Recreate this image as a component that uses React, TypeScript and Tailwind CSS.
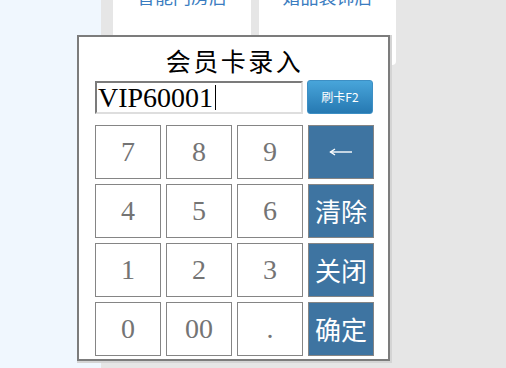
import React from "react";

const cjk = { fontFamily: '"Noto Sans CJK SC", sans-serif' };
const serif = { fontFamily: '"Liberation Serif", "Noto Sans CJK SC", serif' };

function NumKey({ label }: { label: string }) {
  return (
    <div
      className="flex h-[54px] w-[66px] items-center justify-center border border-[#858585] bg-white text-[28px] leading-none text-[#747474]"
      style={serif}
    >
      {label}
    </div>
  );
}

function BlueKey({ children }: { children: React.ReactNode }) {
  return (
    <div
      className="flex h-[54px] w-[66px] items-center justify-center border border-[#858585] bg-[#3e74a1] text-[26px] leading-none text-white"
      style={cjk}
    >
      {children}
    </div>
  );
}

export default function App() {
  return (
    <div className="relative h-[368px] w-[506px] overflow-hidden">
      <div className="flex h-full w-full">
        <div className="h-full w-[101px] bg-[#f0f7fe]" />
        <div className="flex h-full flex-1 gap-[8px] bg-[#e6e6e6] pl-[12px]">
          <div className="flex h-[65px] w-[138px] justify-center overflow-hidden rounded-b-[4px] bg-white">
            <div className="mt-[-13px] text-[18px] leading-[18px] text-[#3a7cc0]" style={cjk}>
              智能门房店
            </div>
          </div>
          <div className="flex h-[65px] w-[137px] justify-center overflow-hidden rounded-b-[4px] bg-white">
            <div className="mt-[-13px] text-[18px] leading-[18px] text-[#3a7cc0]" style={cjk}>
              婚品装饰店
            </div>
          </div>
        </div>
      </div>

      <div className="absolute left-[77px] top-[35px] flex h-[326px] w-[313px] flex-col border-2 border-[#7c7c7c] bg-white shadow-[1px_1px_0_1px_#d4d4d4]">
        <div className="flex h-[43px] items-center justify-center pl-[2px] pt-[3px]">
          <div className="text-[25px] leading-none tracking-[2.5px] text-black" style={cjk}>
            会员卡录入
          </div>
        </div>
        <div className="flex h-[34px] items-start gap-[4px] pl-[16px]">
          <div className="mt-[1px] flex h-[33px] w-[208px] items-center border-2 border-t-[#7b7b7b] border-l-[#7b7b7b] border-r-[#dedede] border-b-[#dedede] bg-white pl-[1px]">
            <span className="text-[28px] leading-none text-black" style={serif}>
              VIP60001
            </span>
            <span className="ml-[2px] h-[25px] w-px bg-black" />
          </div>
          <div
            className="flex h-[34px] w-[66px] items-center justify-center rounded-[3px] border border-[#3d8fc4] bg-gradient-to-b from-[#48a5da] to-[#2679b2] text-[12px] leading-none text-white"
            style={cjk}
          >
            刷卡F2
          </div>
        </div>
        <div className="mt-[11px] grid grid-cols-[66px_66px_66px_66px] gap-[5px] pl-[16px]">
          <NumKey label="7" />
          <NumKey label="8" />
          <NumKey label="9" />
          <BlueKey>
            <svg width="24" height="10" viewBox="0 0 24 10" fill="none">
              <path d="M1.5 5H23" stroke="white" strokeWidth="1.4" />
              <path d="M6 2L1.5 5L6 8" stroke="white" strokeWidth="1.4" fill="none" />
            </svg>
          </BlueKey>
          <NumKey label="4" />
          <NumKey label="5" />
          <NumKey label="6" />
          <BlueKey>清除</BlueKey>
          <NumKey label="1" />
          <NumKey label="2" />
          <NumKey label="3" />
          <BlueKey>关闭</BlueKey>
          <NumKey label="0" />
          <NumKey label="00" />
          <NumKey label="." />
          <BlueKey>确定</BlueKey>
        </div>
      </div>
    </div>
  );
}
